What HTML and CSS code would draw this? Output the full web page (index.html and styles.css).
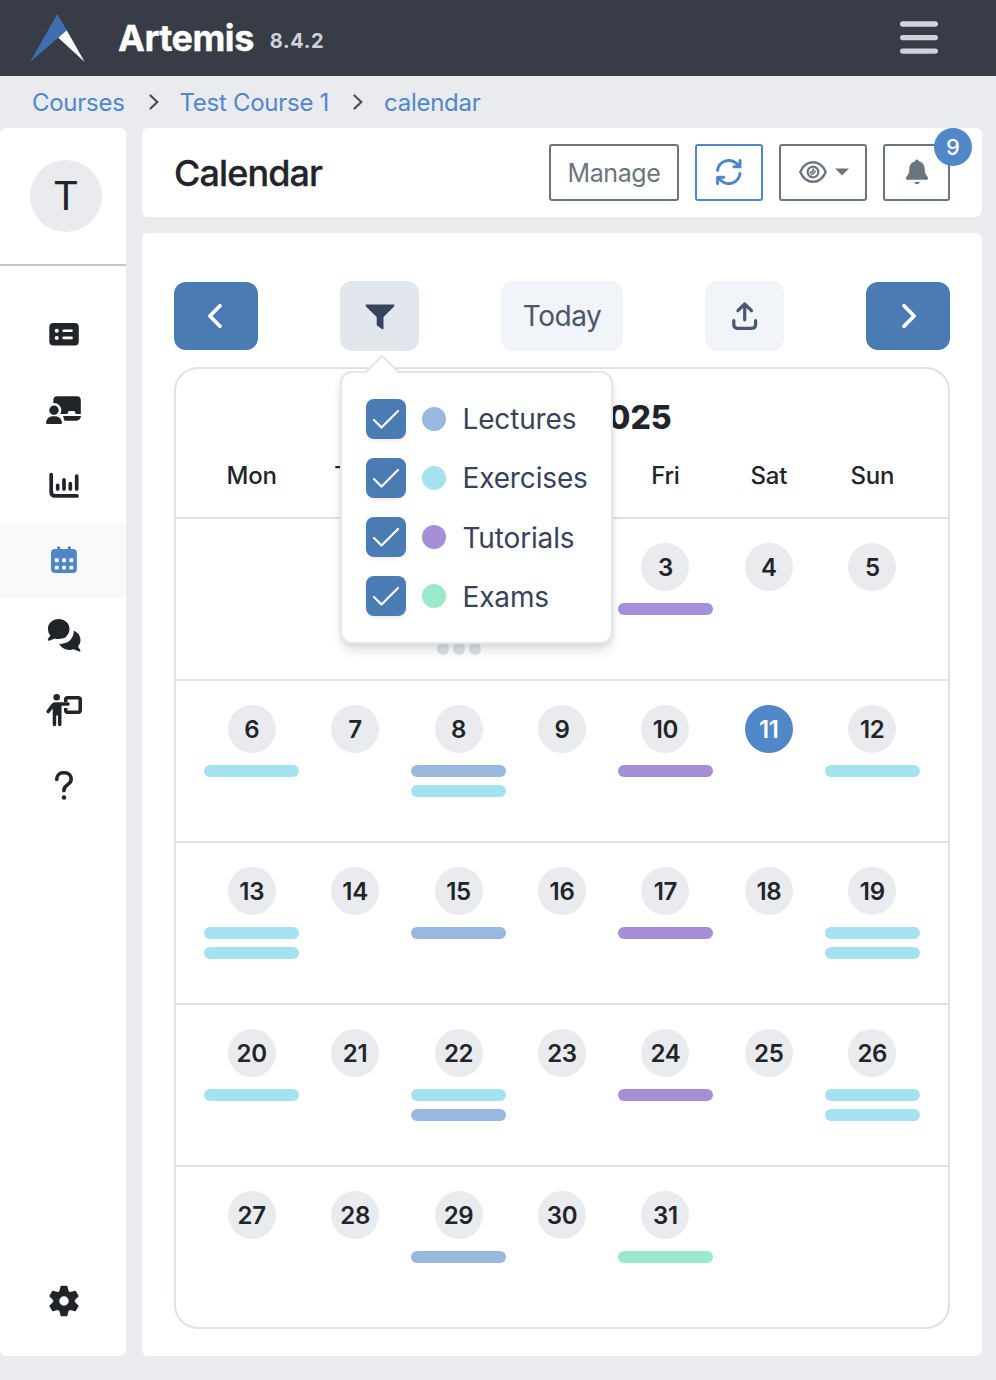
FILE: index.html
```html
<!DOCTYPE html>
<html lang="en">
<head>
<meta charset="utf-8">
<title>Artemis - Calendar</title>
<link rel="stylesheet" href="styles.css">
</head>
<body>
<header class="navbar">
  <svg class="logo" width="56" height="50" viewBox="0 0 56 50"><path fill="#3f6fb0" d="M28.3 1 37.7 17.2 29.3 24.7 1 49Z"/><path fill="#fff" d="M37.7 17.2 55.7 49 29.3 24.7Z"/></svg>
  <span class="brand">Artemis</span>
  <span class="version">8.4.2</span>
  <svg class="menu-icon" width="38" height="34" viewBox="0 0 38 34" stroke="#cdd2db" stroke-width="5.4" stroke-linecap="round"><path d="M2.7 3H35.300M2.7 16.600H35.300M2.7 30.100H35.300"/></svg>
</header>
<nav class="breadcrumbs">
  <a class="crumb">Courses</a>
  <svg class="sep" width="10" height="16" viewBox="0 0 10 16"><path d="M1.5 1.5 8.3 8 1.5 14.5"/></svg>
  <a class="crumb">Test Course 1</a>
  <svg class="sep" width="10" height="16" viewBox="0 0 10 16"><path d="M1.5 1.5 8.3 8 1.5 14.5"/></svg>
  <a class="crumb">calendar</a>
</nav>
<div class="layout">
  <aside class="sidebar">
    <div class="course"><span class="avatar">T</span></div>
    <ul class="side-nav">
      <li class="side-item"><svg class="side-icon" viewBox="0 0 40 41"><rect x="5.3" y="7.9" width="29.5" height="22.6" rx="4"/><g fill="#fff"><circle cx="12.7" cy="15.700" r="2"/><circle cx="12.7" cy="22.900" r="2"/><rect x="18.3" y="14.400" width="10.5" height="2.7" rx="1.3"/><rect x="18.3" y="21.600" width="10.5" height="2.7" rx="1.3"/></g></svg></li>
      <li class="side-item"><svg class="side-icon" viewBox="0 0 40 41"><path d="M13.3 6.300H32.800a4 4 0 0 1 4 4V24H31.5V23a2 2 0 0 0-2-2H25.700a2 2 0 0 0-2 2v1H9.300V10.300a4 4 0 0 1 4-4Z"/><path d="M19 26H37a4.700 4.700 0 0 1-4.700 4.700H20.500Z"/><circle cx="10" cy="20.300" r="7.300" fill="#fff"/><circle cx="10" cy="20.300" r="4.700"/><path d="M2 32.800a6.500 6.500 0 0 1 6.500-6.500h3A6.500 6.500 0 0 1 18 32.800q0 1.200-1.200 1.200H3.200Q2 34 2 32.800Z"/></svg></li>
      <li class="side-item"><svg class="side-icon" viewBox="0 0 40 41"><g fill="none" stroke="#212529" stroke-width="3.700" stroke-linecap="round"><path d="M7.200 9.700V27q0 3.900 3.900 3.900H33"/><path d="M13.700 20.300V24M20 14.900V24M26.300 18.600V24M32.700 11.200V24"/></g></svg></li>
      <li class="side-item active"><svg class="side-icon" viewBox="0 0 40 41"><rect x="7" y="9" width="25.900" height="24" rx="4"/><path stroke="#4f87c8" stroke-width="3.400" stroke-linecap="round" d="M14.700 7.900V12M25.300 7.900V12"/><g fill="#f8f9fb"><rect x="10.800" y="18.300" width="3.900" height="3.900" rx="1"/><rect x="18.100" y="18.300" width="3.900" height="3.900" rx="1"/><rect x="25.400" y="18.300" width="3.900" height="3.900" rx="1"/><rect x="10.800" y="25.700" width="3.900" height="3.900" rx="1"/><rect x="18.100" y="25.700" width="3.900" height="3.900" rx="1"/><rect x="25.400" y="25.700" width="3.900" height="3.900" rx="1"/></g></svg></li>
      <li class="side-item"><svg class="side-icon" viewBox="0 0 40 41"><path d="M25.700 15c6 0 10.800 4.400 10.800 10 0 2.500-.9 4.700-2.500 6.400L36.300 35q.8 1.700-1.200 1.600L29.500 34.300q-2 .6-3.800.6c-5 0-9.500-3-10.700-7Z"/><path fill="none" stroke="#fff" stroke-width="5" d="M27.400 14q0 12.500-13 12.500"/><path d="M14.700 4C20.700 4 25.500 8.400 25.500 14S20.700 24 14.700 24q-2 0-3.900-.6L5.200 25.700q-2 .1-1.300-1.600L6.400 20.500Q3.900 17.800 3.900 14C3.900 8.400 8.700 4 14.700 4Z"/></svg></li>
      <li class="side-item"><svg class="side-icon" viewBox="0 0 40 41"><circle cx="12.700" cy="7.300" r="3.300"/><path d="M11.300 12.200H24a1.700 1.700 0 0 1 0 3.500H17.500V34.600a1.700 1.700 0 0 1-3.500 0V25.500H12.200V34.600a1.700 1.700 0 0 1-3.500 0V18.500L5.600 22.500a1.700 1.700 0 0 1-2.900-1.900L7.300 14.300Q8.800 12.200 11.300 12.200Z"/><path fill="none" stroke="#212529" stroke-width="3.500" d="M21.700 12V9.600Q21.700 7.700 23.600 7.700H34.300Q36.200 7.700 36.200 9.600V20.300Q36.200 22.200 34.300 22.200H23.600Q21.700 22.200 21.700 20.300V18"/></svg></li>
      <li class="side-item"><svg class="side-icon" viewBox="0 0 40 41"><path fill="none" stroke="#212529" stroke-width="3.600" stroke-linecap="round" d="M12.700 14.500C12.700 10.500 15.500 7.800 19.200 7.800H20.400C24.400 7.800 27.200 10.600 27.200 14.200 27.200 20 19.900 19.300 19.900 25.300V25.800"/><circle cx="20" cy="32.500" r="2.300"/></svg></li>
    </ul>
    <div class="settings"><svg width="34" height="34" viewBox="-17 -17 34 34" fill="#212529"><path fill-rule="evenodd" d="M0-10.800A10.800 10.800 0 0 1 0 10.800 10.800 10.800 0 0 1 0-10.800ZM0-4.700A4.700 4.700 0 0 0 0 4.700 4.700 4.700 0 0 0 0-4.700Z"/><g stroke="#212529" stroke-width="2" stroke-linejoin="round"><path id="tooth" d="M-2.500-14.200H2.500L3.800-9H-3.800Z"/><use href="#tooth" transform="rotate(60)"/><use href="#tooth" transform="rotate(120)"/><use href="#tooth" transform="rotate(180)"/><use href="#tooth" transform="rotate(240)"/><use href="#tooth" transform="rotate(300)"/></g></svg></div>
  </aside>
  <main class="main">
    <section class="card title-bar">
      <h1 class="title">Calendar</h1>
      <div class="actions">
        <button class="btn btn-manage">Manage</button>
        <button class="btn btn-refresh"><svg width="28" height="28" viewBox="0 0 28 28" fill="none" stroke="#4f87c8" stroke-width="3" stroke-linecap="round" stroke-linejoin="round"><path id="turn" d="M2.600 12.400A11.400 11.400 0 0 1 21.600 5.500L24.800 8.500M25 2.500V8.700H18.900"/><use href="#turn" transform="rotate(180 13.800 14)"/></svg></button>
        <button class="btn btn-view"><svg width="28" height="24" viewBox="0 0 28 24" fill="none" stroke="#6c757d" stroke-width="2.400"><path d="M1.300 12C4 5.500 8.500 2.200 14 2.200S24 5.500 26.700 12C24 18.500 19.500 21.800 14 21.800S4 18.500 1.300 12Z"/><circle cx="14" cy="12" r="5.400" stroke-width="2.200"/><path stroke-width="2" d="M14.300 8.500Q14.800 12.700 10.500 12.500"/><path stroke-width="1.400" d="M11.700 14.300Q14.500 15.200 16.700 10.800"/></svg><svg width="14" height="8" viewBox="0 0 14 8"><path fill="#6c757d" d="M0 .500H14L7 7.500Z"/></svg></button>
        <button class="btn btn-bell"><svg width="24" height="26" viewBox="0 0 24 26" fill="#6c757d"><path d="M12 .500A1.800 1.800 0 0 1 13.800 2.300C17.500 3.200 19.700 6 19.700 9.600 19.700 14.500 20.800 15.800 22.600 18 23.800 19.600 23 20.800 21.500 20.800H2.500C1 20.800.2 19.600 1.400 18 3.200 15.800 4.300 14.500 4.300 9.600 4.300 6 6.500 3.200 10.200 2.300A1.800 1.800 0 0 1 12 .500ZM9.200 23H14.800Q14.200 25.300 12 25.300T9.200 23Z"/></svg><span class="badge">9</span></button>
      </div>
    </section>
    <section class="card calendar">
      <div class="controls">
        <button class="ctl primary"><svg width="18" height="26" viewBox="0 0 18 26"><path d="M13 2.800 2.900 13 13 23.200"/></svg></button>
        <div class="filter-wrap">
          <button class="ctl filter"><svg width="30" height="26" viewBox="0 0 30 26"><path fill="#37435a" d="M1.500.500H28.500Q29.600.500 29.300 1.700L28.800 2.700 18.500 13V24.300Q18.500 25.800 17.300 25.200L11.700 21.300V13L1.200 2.700.700 1.700Q.400.500 1.500.500Z"/></svg></button>
          <div class="popover">
            <svg class="popover-arrow" width="36" height="21" viewBox="0 0 36 21"><path fill="#fff" d="M1 19 18 2 35 19V21H1Z"/><path fill="none" stroke="#e2e7ee" stroke-width="2.200" d="M.500 19.200 18 1.700 35.500 19.200"/></svg>
            <label class="option"><span class="check"><svg width="28" height="20" viewBox="0 0 28 20"><path d="M2 11 9.500 18.500 26 2"/></svg></span><span class="dot lecture"></span><span class="label">Lectures</span></label>
            <label class="option"><span class="check"><svg width="28" height="20" viewBox="0 0 28 20"><path d="M2 11 9.500 18.500 26 2"/></svg></span><span class="dot exercise"></span><span class="label">Exercises</span></label>
            <label class="option"><span class="check"><svg width="28" height="20" viewBox="0 0 28 20"><path d="M2 11 9.500 18.500 26 2"/></svg></span><span class="dot tutorial"></span><span class="label low">Tutorials</span></label>
            <label class="option"><span class="check"><svg width="28" height="20" viewBox="0 0 28 20"><path d="M2 11 9.500 18.500 26 2"/></svg></span><span class="dot exam"></span><span class="label low">Exams</span></label>
          </div>
        </div>
        <button class="ctl today">Today</button>
        <button class="ctl export"><svg width="26" height="30" viewBox="0 0 26 30" fill="none" stroke="#4a566a" stroke-width="3.200" stroke-linecap="round" stroke-linejoin="round"><path d="M12.700 18.800V3.300M5.900 9.700 12.700 3 19.500 9.700M1.800 19.500V23.500Q1.800 27.300 5.600 27.300H19.800Q23.600 27.300 23.600 23.500V19.500"/></svg></button>
        <button class="ctl primary"><svg width="18" height="26" viewBox="0 0 18 26"><path d="M5 2.800 15.100 13 5 23.200"/></svg></button>
      </div>
      <div class="month">
        <div class="month-head">
          <h2 class="month-name">October 2025</h2>
          <div class="weekdays"><span>Mon</span><span>Tue</span><span>Wed</span><span>Thu</span><span>Fri</span><span>Sat</span><span>Sun</span></div>
        </div>
        <div class="week">
          <div class="day"></div>
          <div class="day"></div>
          <div class="day"><span class="num">1</span><i class="bar lecture"></i><i class="bar exercise"></i><span class="more"><i></i><i></i><i></i></span></div>
          <div class="day"><span class="num">2</span></div>
          <div class="day"><span class="num">3</span><i class="bar tutorial"></i></div>
          <div class="day"><span class="num">4</span></div>
          <div class="day"><span class="num">5</span></div>
        </div>
        <div class="week">
          <div class="day"><span class="num">6</span><i class="bar exercise"></i></div>
          <div class="day"><span class="num">7</span></div>
          <div class="day"><span class="num">8</span><i class="bar lecture"></i><i class="bar exercise"></i></div>
          <div class="day"><span class="num">9</span></div>
          <div class="day"><span class="num">10</span><i class="bar tutorial"></i></div>
          <div class="day"><span class="num current">11</span></div>
          <div class="day"><span class="num">12</span><i class="bar exercise"></i></div>
        </div>
        <div class="week">
          <div class="day"><span class="num">13</span><i class="bar exercise"></i><i class="bar exercise"></i></div>
          <div class="day"><span class="num">14</span></div>
          <div class="day"><span class="num">15</span><i class="bar lecture"></i></div>
          <div class="day"><span class="num">16</span></div>
          <div class="day"><span class="num">17</span><i class="bar tutorial"></i></div>
          <div class="day"><span class="num">18</span></div>
          <div class="day"><span class="num">19</span><i class="bar exercise"></i><i class="bar exercise"></i></div>
        </div>
        <div class="week">
          <div class="day"><span class="num">20</span><i class="bar exercise"></i></div>
          <div class="day"><span class="num">21</span></div>
          <div class="day"><span class="num">22</span><i class="bar exercise"></i><i class="bar lecture"></i></div>
          <div class="day"><span class="num">23</span></div>
          <div class="day"><span class="num">24</span><i class="bar tutorial"></i></div>
          <div class="day"><span class="num">25</span></div>
          <div class="day"><span class="num">26</span><i class="bar exercise"></i><i class="bar exercise"></i></div>
        </div>
        <div class="week">
          <div class="day"><span class="num">27</span></div>
          <div class="day"><span class="num">28</span></div>
          <div class="day"><span class="num">29</span><i class="bar lecture"></i></div>
          <div class="day"><span class="num">30</span></div>
          <div class="day"><span class="num">31</span><i class="bar exam"></i></div>
          <div class="day"></div>
          <div class="day"></div>
        </div>
      </div>
    </section>
  </main>
</div>
</body>
</html>
```
FILE: styles.css
```css
* { box-sizing: border-box; }
body { margin: 0; height: 1380px; overflow: hidden; background: #eaebef; font-family: Inter, "Liberation Sans", sans-serif; color: #212529; }
svg { display: block; flex: none; }
h1, h2, ul { margin: 0; padding: 0; }
button { margin: 0; font: inherit; }

.navbar { display: flex; align-items: center; height: 76px; padding: 0 58px 0 29px; background: #373c46; }
.logo { margin-right: 33px; }
.brand { font-size: 36px; font-weight: 700; letter-spacing: -0.5px; color: #fff; -webkit-text-stroke: 0.4px #fff; }
.version { margin: 5px 0 0 16px; font-size: 20px; font-weight: 700; letter-spacing: 0.6px; color: #cdd2db; }
.menu-icon { margin-left: auto; }

.breadcrumbs { display: flex; align-items: center; height: 52px; padding-left: 32px; font-size: 24px; }
.crumb { color: #4f87c8; letter-spacing: -0.28px; }
.sep { margin: 0 21px 0 24px; fill: none; stroke: #4b4e53; stroke-width: 2.2; stroke-linecap: round; }

.layout { display: flex; gap: 16px; height: 1228px; }
.sidebar { display: flex; flex-direction: column; width: 126px; background: #fff; border-radius: 6px; }
.course { height: 138px; padding: 32px 0 0 30px; border-bottom: 2px solid #c4c6c9; }
.avatar { display: flex; align-items: center; justify-content: center; width: 72px; height: 72px; padding-bottom: 2px; border-radius: 50%; background: #eaebef; font-size: 40px; }
.side-nav { padding-top: 32px; list-style: none; }
.side-item { display: flex; height: 75px; padding: 17px 0 0 44px; }
.side-item.active { background: #f8f9fb; }
.side-icon { width: 40px; height: 41px; fill: #212529; }
.active .side-icon { fill: #4f87c8; }
.settings { margin: auto 0 38px 47px; }

.main { display: flex; flex-direction: column; gap: 16px; width: 840px; }
.card { background: #fff; border-radius: 6px; }
.title-bar { display: flex; align-items: center; justify-content: space-between; height: 89px; padding: 0 32px; }
.title { font-size: 36px; font-weight: 500; letter-spacing: -0.9px; -webkit-text-stroke: 0.3px #212529; }
.actions { display: flex; gap: 16px; }
.btn { position: relative; display: flex; align-items: center; justify-content: center; height: 57px; padding: 0 0 2px; border: 2px solid #6c757d; border-radius: 3px; background: #fff; color: #6c757d; font-size: 25px; }
.btn-manage { width: 130px; padding: 0; letter-spacing: -0.4px; }
.btn-refresh { width: 68px; border-color: #4f87c8; }
.btn-view { width: 88px; gap: 8px; padding-left: 1px; }
.btn-bell { width: 67px; }
.badge { position: absolute; top: -18px; right: -24px; display: flex; align-items: center; justify-content: center; width: 38px; height: 38px; border-radius: 50%; background: #4f87c8; color: #fff; font-size: 22px; font-weight: 500; }

.calendar { flex: 1; padding: 48px 32px 0; }
.controls { display: flex; align-items: center; justify-content: space-between; height: 70px; }
.ctl { display: flex; align-items: center; justify-content: center; height: 70px; padding: 0; border: 0; border-radius: 12px; background: #f1f4f9; color: #4a566a; font-size: 28px; }
.primary { width: 84px; height: 68px; background: #4a7bb3; }
.primary svg { fill: none; stroke: #fff; stroke-width: 3.7; stroke-linecap: round; stroke-linejoin: round; }
.filter { width: 79px; padding-top: 2px; background: #e2e7ee; }
.today { width: 122px; letter-spacing: -0.5px; }
.export { width: 79px; }

.filter-wrap { position: relative; }
.popover { position: absolute; z-index: 2; top: 90px; left: 0; display: flex; flex-direction: column; gap: 19px; width: 273px; height: 273px; padding: 26px 0 0 24px; border: 2px solid #e2e7ee; border-radius: 12px; background: #fff; box-shadow: 0 8px 12px -2px rgba(0, 0, 0, .13), 0 2px 5px rgba(0, 0, 0, .06); }
.popover-arrow { position: absolute; top: -19px; left: 22px; }
.option { display: flex; align-items: center; height: 40px; color: #37435a; font-size: 28px; }
.check { display: flex; align-items: center; justify-content: center; flex: none; width: 40px; height: 40px; margin-right: 16px; border-radius: 8px; background: #4a7bb3; box-shadow: 0 2px 4px rgba(0, 0, 0, .08); }
.check svg { fill: none; stroke: #fff; stroke-width: 2.2; stroke-linecap: round; stroke-linejoin: round; }
.dot { flex: none; width: 24px; height: 24px; margin-right: 16.500px; border-radius: 50%; }
.label { letter-spacing: -0.15px; }
.low { padding-top: 2px; }

.lecture { background: #98b8de; }
.exercise { background: #a5e2ef; }
.tutorial { background: #a58fd6; }
.exam { background: #99e9ca; }

.month { height: 962px; margin-top: 16px; border: 2px solid #dee2e6; border-radius: 24px; overflow: hidden; }
.month-head { height: 148px; padding: 25px 24px 0; }
.month-name { text-align: center; font-size: 32px; line-height: 48px; font-weight: 800; }
.weekdays { display: grid; grid-template-columns: repeat(7, 1fr); margin-top: 16px; text-align: center; font-size: 24px; line-height: 36px; font-weight: 500; letter-spacing: -0.2px; }
.week { display: grid; grid-template-columns: repeat(7, 1fr); height: 162px; padding: 24px 24px 0; border-top: 2px solid #dee2e6; }
.day { display: flex; flex-direction: column; align-items: center; gap: 8px; padding: 0 4px; }
.num { display: flex; align-items: center; justify-content: center; width: 48px; height: 48px; margin-bottom: 4px; border-radius: 50%; background: #eaebef; font-size: 24px; font-weight: 600; letter-spacing: -0.3px; }
.current { background: #4f87c8; color: #fff; }
.bar { width: 100%; height: 12px; border-radius: 6px; }
.more { display: flex; gap: 4px; }
.more i { width: 12px; height: 12px; border-radius: 50%; background: #dee2e6; }
```
